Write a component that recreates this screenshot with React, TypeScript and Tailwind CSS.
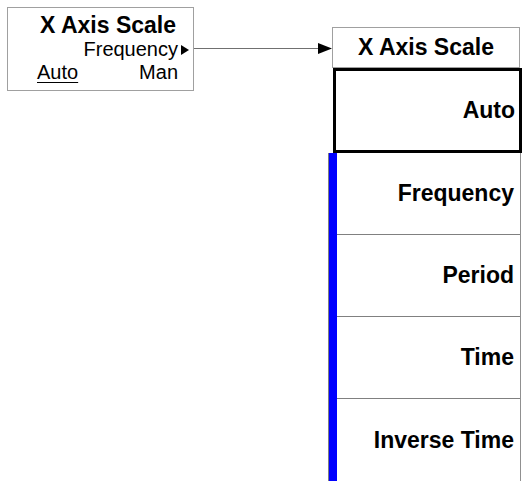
const rows = ["Frequency", "Period", "Time", "Inverse Time"];

function SoftkeySummary() {
  return (
    <div className="ml-[7px] mt-[7px] flex h-[84px] w-[187px] flex-col border border-[#a0a0a0] pt-[4px]">
      <div className="pr-[17px] text-right text-[23px] font-bold leading-[26px]">X Axis Scale</div>
      <div className="flex items-center justify-end gap-[3px] pr-[4px] text-[20px] leading-[22px]">
        <span>Frequency</span>
        <svg width="8" height="10" viewBox="0 0 8 10" className="mt-[1px]">
          <polygon points="0,0 8,5 0,10" fill="#000" />
        </svg>
      </div>
      <div className="flex justify-between pl-[29px] pr-[15px] text-[20px] leading-[24px]">
        <span className="underline decoration-1 underline-offset-[3px]">Auto</span>
        <span>Man</span>
      </div>
    </div>
  );
}

function Connector() {
  return (
    <div className="mt-[43px] flex h-[11px] w-[138px] items-center">
      <div className="h-px flex-1 bg-[#707070]" />
      <svg width="14" height="11" viewBox="0 0 14 11">
        <polygon points="0,0 14,5.5 0,11" fill="#000" />
      </svg>
    </div>
  );
}

function Menu() {
  return (
    <div className="ml-[-4px] mt-[27px] flex w-[194px] flex-col">
      <div className="ml-[4px] flex h-[41px] w-[188px] items-center justify-center border border-[#a0a0a0] text-[23px] font-bold">
        X Axis Scale
      </div>
      <div className="ml-[5px] flex h-[85px] w-[189px] items-center justify-end border-[3px] border-black pr-[4px] text-[23px] font-bold">
        Auto
      </div>
      <div className="flex">
        <div className="w-[9px] border-l border-[#808080] bg-[#0000ff]" />
        <div className="flex w-[184px] flex-col border-r border-[#909090]">
          {rows.map((label, i) => (
            <div
              key={label}
              className={
                i < rows.length - 1
                  ? "flex h-[82px] items-center justify-end border-b border-[#808080] pr-[6px] text-[23px] font-bold"
                  : "flex h-[82px] items-center justify-end pr-[6px] text-[23px] font-bold"
              }
            >
              {label}
            </div>
          ))}
        </div>
      </div>
    </div>
  );
}

export default function App() {
  return (
    <div className="flex h-[482px] w-[522px] items-start overflow-hidden bg-white font-['Liberation_Sans',Arial,sans-serif] text-black">
      <SoftkeySummary />
      <Connector />
      <Menu />
    </div>
  );
}
